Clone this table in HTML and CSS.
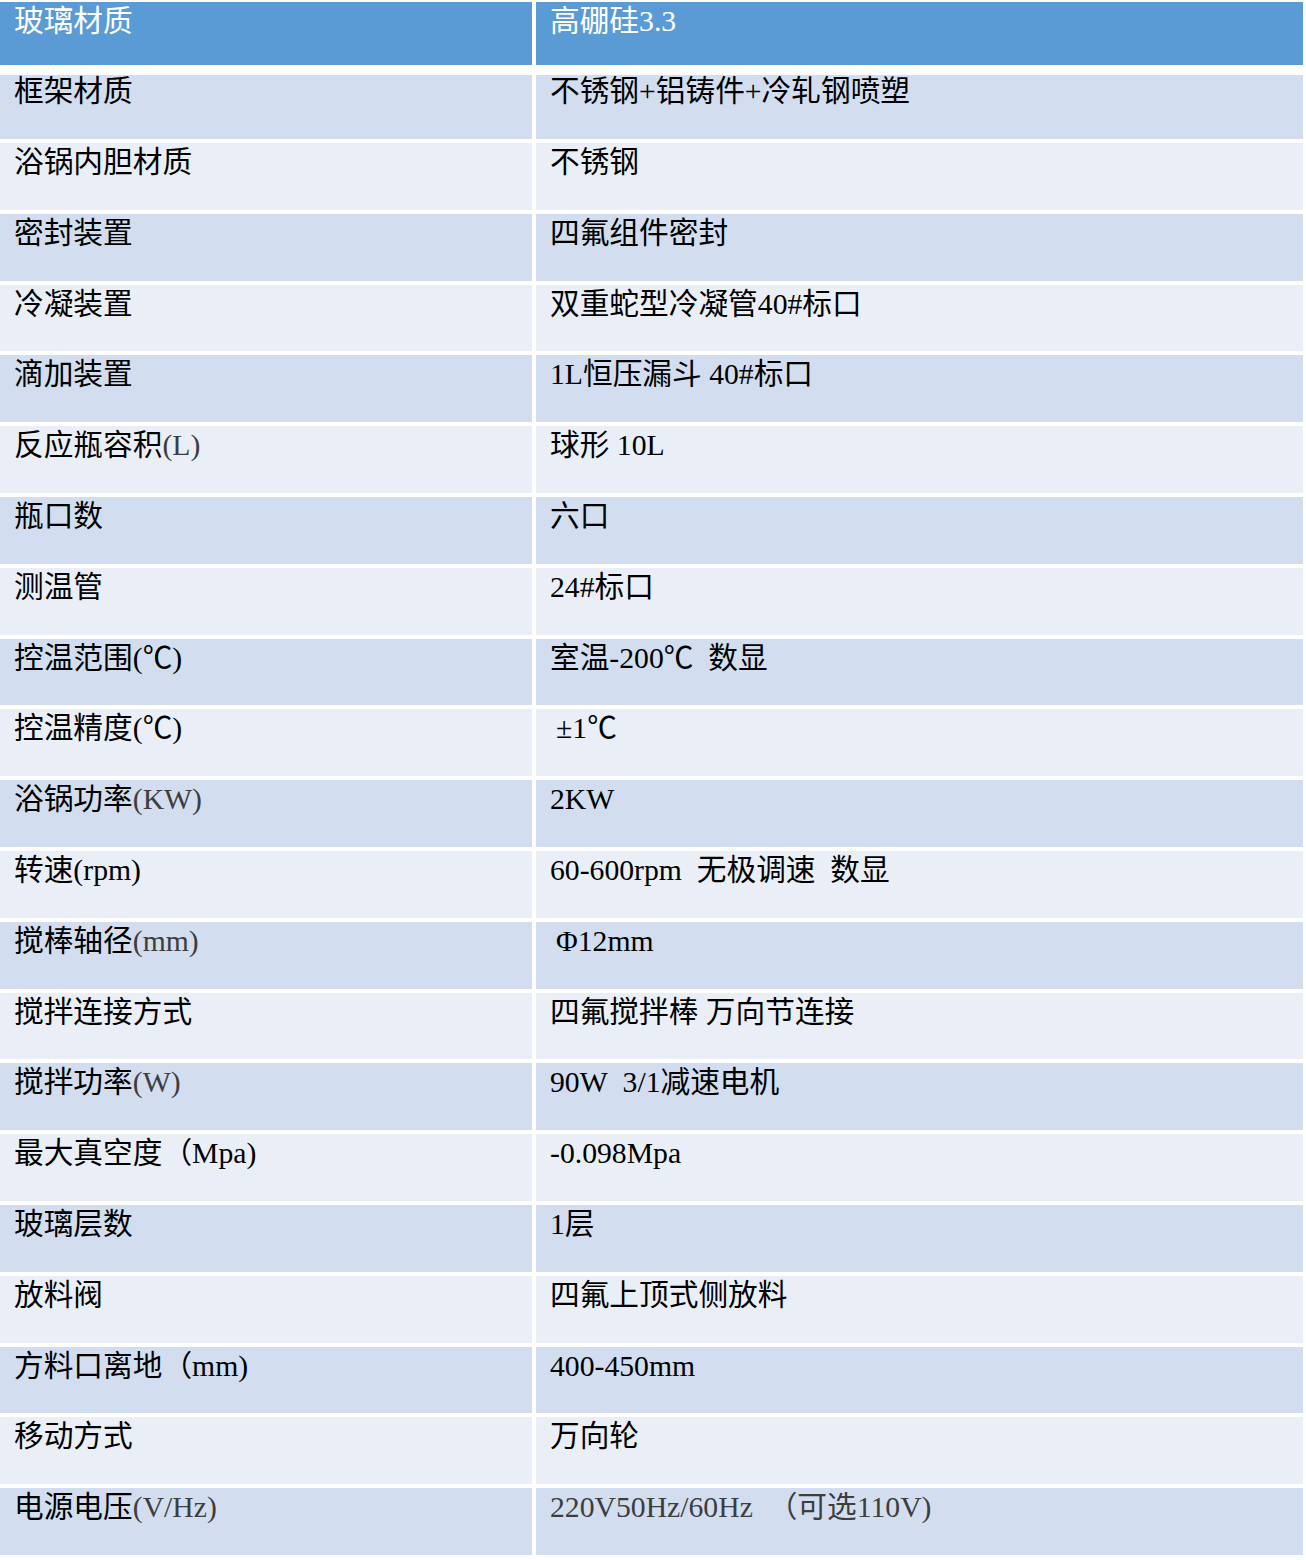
FILE: index.html
```html
<!DOCTYPE html>
<html lang="zh-CN">
<head>
<meta charset="utf-8">
<title>规格参数</title>
<link rel="stylesheet" href="styles.css">
</head>
<body>
<div class="spec">
  <div class="row head"><div class="cell">玻璃材质</div><div class="cell">高硼硅3.3</div></div>
  <div class="row odd first"><div class="cell">框架材质</div><div class="cell">不锈钢+铝铸件+冷轧钢喷塑</div></div>
  <div class="row even"><div class="cell">浴锅内胆材质</div><div class="cell">不锈钢</div></div>
  <div class="row odd"><div class="cell">密封装置</div><div class="cell">四氟组件密封</div></div>
  <div class="row even"><div class="cell">冷凝装置</div><div class="cell">双重蛇型冷凝管40#标口</div></div>
  <div class="row odd"><div class="cell">滴加装置</div><div class="cell">1L恒压漏斗 40#标口</div></div>
  <div class="row even"><div class="cell">反应瓶容积<span class="grey">(L)</span></div><div class="cell">球形 10L</div></div>
  <div class="row odd"><div class="cell">瓶口数</div><div class="cell">六口</div></div>
  <div class="row even"><div class="cell">测温管</div><div class="cell">24#标口</div></div>
  <div class="row odd"><div class="cell">控温范围(℃)</div><div class="cell">室温-200℃&nbsp;&nbsp;数显</div></div>
  <div class="row even"><div class="cell">控温精度(℃)</div><div class="cell"><span class="indent">±1℃</span></div></div>
  <div class="row odd"><div class="cell">浴锅功率<span class="grey">(KW)</span></div><div class="cell">2KW</div></div>
  <div class="row even"><div class="cell">转速(rpm)</div><div class="cell">60-600rpm&nbsp;&nbsp;无极调速&nbsp;&nbsp;数显</div></div>
  <div class="row odd"><div class="cell">搅棒轴径<span class="grey">(mm)</span></div><div class="cell"><span class="indent">Φ12mm</span></div></div>
  <div class="row even"><div class="cell">搅拌连接方式</div><div class="cell">四氟搅拌棒 万向节连接</div></div>
  <div class="row odd"><div class="cell">搅拌功率<span class="grey">(W)</span></div><div class="cell">90W&nbsp;&nbsp;3/1减速电机</div></div>
  <div class="row even"><div class="cell">最大真空度（Mpa)</div><div class="cell">-0.098Mpa</div></div>
  <div class="row odd"><div class="cell">玻璃层数</div><div class="cell">1层</div></div>
  <div class="row even"><div class="cell">放料阀</div><div class="cell">四氟上顶式侧放料</div></div>
  <div class="row odd"><div class="cell">方料口离地（mm)</div><div class="cell">400-450mm</div></div>
  <div class="row even"><div class="cell">移动方式</div><div class="cell">万向轮</div></div>
  <div class="row odd"><div class="cell">电源电压<span class="grey">(V/Hz)</span></div><div class="cell grey">220V50Hz/60Hz&nbsp;&nbsp;（可选110V)</div></div>
</div>
</body>
</html>
```

FILE: styles.css
```css
html, body {
  margin: 0;
  padding: 0;
  background: #ffffff;
}

.spec {
  display: flex;
  flex-direction: column;
  gap: 4px;
  padding-top: 2px;
  width: 1303px;
  font-family: "Liberation Serif", "Noto Sans CJK SC", serif;
  font-size: 29.7px;
  line-height: 30px;
  color: #000000;
}

.row {
  display: grid;
  grid-template-columns: 532px 767px;
  column-gap: 4px;
  height: 66.8px;
}

.cell {
  padding: 4px 0 0 14px;
  white-space: nowrap;
  overflow: hidden;
}

.row.head {
  height: 63px;
  margin-bottom: 6px;
}

.row.head .cell {
  background: #5b9bd5;
  color: #ffffff;
  padding-top: 4px;
}

.row.first {
  height: 64px;
}

.row.first .cell {
  padding-top: 1px;
}

.row.odd .cell {
  background: #d2deef;
}

.row.even .cell {
  background: #eaeff7;
}

.grey {
  color: #3d3d3d;
}

.indent {
  padding-left: 6px;
}
```
